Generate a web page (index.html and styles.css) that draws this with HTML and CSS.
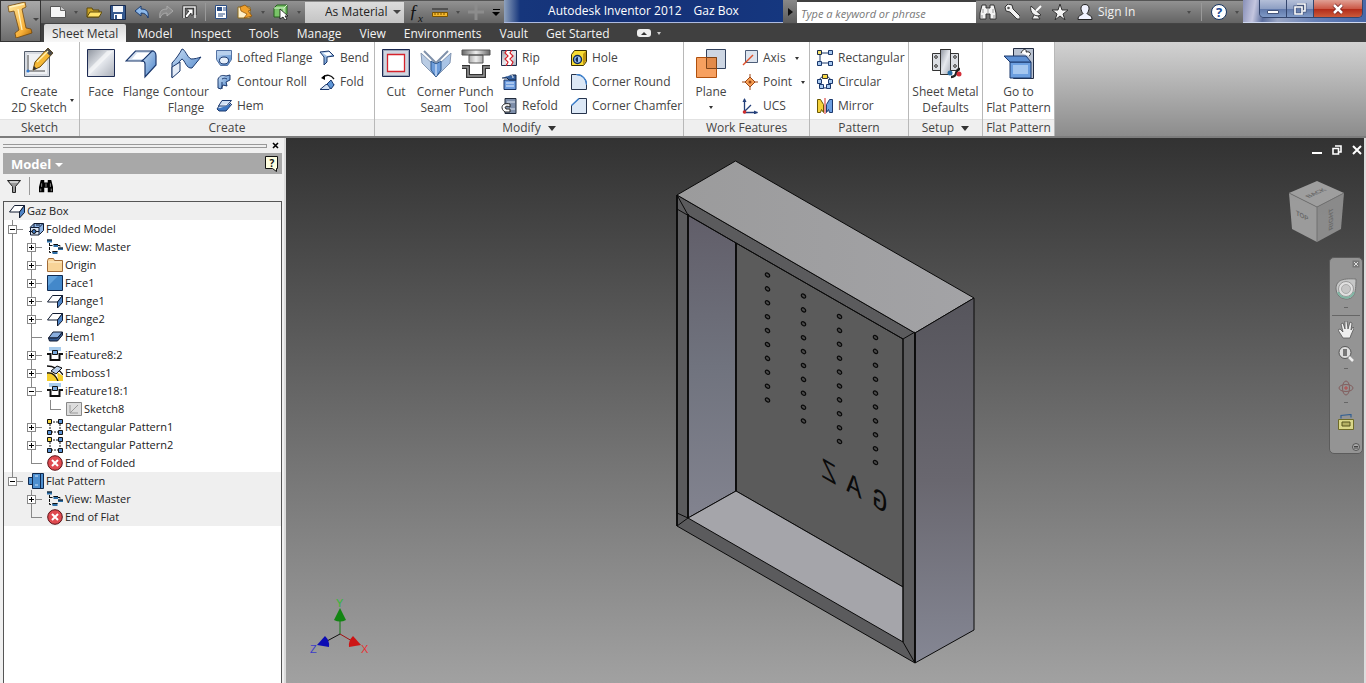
FILE: index.html
```html
<!DOCTYPE html>
<html lang="en">
<head>
<meta charset="utf-8">
<title>Autodesk Inventor 2012 - Gaz Box</title>
<link rel="stylesheet" href="styles.css">
</head>
<body>
<svg class="defs" aria-hidden="true">
  <defs>
    <linearGradient id="steel" x1="0" y1="0" x2="1" y2="1"><stop offset="0" stop-color="#8f959f"/><stop offset=".5" stop-color="#e6e9ee"/><stop offset="1" stop-color="#a9aeb8"/></linearGradient>
    <linearGradient id="blue" x1="0" y1="0" x2="1" y2="1"><stop offset="0" stop-color="#c9def4"/><stop offset="1" stop-color="#4a82c8"/></linearGradient>
    <linearGradient id="grey" x1="0" y1="0" x2="1" y2="0"><stop offset="0" stop-color="#666"/><stop offset=".5" stop-color="#eee"/><stop offset="1" stop-color="#666"/></linearGradient>
    <linearGradient id="gold" x1="0" y1="0" x2="1" y2="1"><stop offset="0" stop-color="#ffe9a0"/><stop offset=".7" stop-color="#f8b038"/><stop offset="1" stop-color="#b06a08"/></linearGradient>
    <linearGradient id="wall" x1="0" y1="0" x2="0" y2="1"><stop offset="0" stop-color="#615e69"/><stop offset=".5" stop-color="#70737e"/><stop offset="1" stop-color="#82838f"/></linearGradient>
    <linearGradient id="side" x1="0" y1="0" x2="0" y2="1"><stop offset="0" stop-color="#56555c"/><stop offset=".5" stop-color="#69676f"/><stop offset="1" stop-color="#858794"/></linearGradient>
    <linearGradient id="lid" x1="0" y1="0" x2="1" y2="0"><stop offset="0" stop-color="#9b9b9c"/><stop offset="1" stop-color="#a3a3a6"/></linearGradient>
    <symbol id="i-flange" viewBox="0 0 16 16"><path d="M5.500 2.500h10l-5 6.500h-10z" fill="#fff" stroke="#111b30"/><path d="M15.500 2.500v7l-5 5.500v-6z" fill="#4f84c6" stroke="#111b30"/></symbol>
    <symbol id="i-view" viewBox="0 0 16 16"><path d="M2.500 4v9.500h3M2.500 6.500h4M11 6.500h2v2" fill="none" stroke="#111" stroke-dasharray="3 1"/><path d="M0 .500h5v3h-5zM6.500 5h4.500v3h-4.500zM11 8.500h5v2.500h-5zM5.500 12h5v3h-5z" fill="#2d6fa8"/><path d="M0 1h5M6.500 5.500h4.500M11 9h5M5.500 12.500h5" stroke="#111"/></symbol>
    <symbol id="i-punch" viewBox="0 0 16 16"><path d="M2 0h12v4h-12z" fill="#a9cdee"/><path d="M5.500 3.500h5v4h-5z" fill="#78a9dc" stroke="#111"/><path d="M0 7h3.500v6h9v-6h3.500" fill="none" stroke="#111" stroke-width="2"/></symbol>
    <symbol id="i-pattern" viewBox="0 0 16 16"><path d="M3 3h10v10h-10z" fill="none" stroke="#111" stroke-dasharray="2 1"/><path d="M0 0h5v5h-5zM11 0h5v5h-5zM0 11h5v5h-5zM11 11h5v5h-5z" fill="#fff"/><path d="M.500 .500h4v4h-4z" fill="#f6d745" stroke="#111"/><path d="M11.500 .500h4v4h-4zM.500 11.500h4v4h-4zM11.500 11.500h4v4h-4z" fill="#5b93d5" stroke="#111"/></symbol>
    <symbol id="i-end" viewBox="0 0 16 16"><circle cx="8" cy="8" r="7.300" fill="#df4a50" stroke="#5b1116"/><path d="M5 5l6 6M11 5l-6 6" stroke="#fff" stroke-width="2"/></symbol>
    <symbol id="i-binoc" viewBox="0 0 18 16"><path d="M3 1h4v3h4v-3h4l2 8v6h-6v-5h-4v5h-6v-6z"/><path d="M4 5v4M14 5v4M3 11v3M15 11v3M9 5v4" stroke="#999" stroke-width="1"/></symbol>
    <g id="holes" fill="#4a4a4a" stroke="#0a0a0a" stroke-width="1.200">
      <ellipse id="hole" rx="2.500" ry="1.700" transform="rotate(40)"/><use href="#hole" y="13.900"/><use href="#hole" y="27.800"/><use href="#hole" y="41.700"/><use href="#hole" y="55.600"/><use href="#hole" y="69.500"/><use href="#hole" y="83.400"/><use href="#hole" y="97.300"/><use href="#hole" y="111.200"/><use href="#hole" y="125"/>
    </g>
  </defs>
</svg>

<header class="top">
  <button class="app-button" aria-label="Application menu">
    <svg width="26" height="36" viewBox="0 0 26 36"><path d="M1 4l17-4 1 5-4 2 4 19 5 1 1 4-16 5-1-5 4-3-5-19-5 1z" fill="url(#gold)" stroke="#6b3d00" stroke-width=".7"/><path d="M3 5l14-3M11 7l4 21" stroke="#fff3c0" stroke-width="1.300"/></svg>
    <i class="caret"></i>
  </button>
  <div class="top-rows">
    <div class="title-row">
      <div class="quick">
        <button class="tool" aria-label="New"><svg width="16" height="16" viewBox="0 0 16 16"><path d="M.500 2.500h10l5 4v7h-15z" fill="#f6f6f6" stroke="#555"/><path d="M10.500 2.500v4h5" fill="#ccc" stroke="#666"/></svg></button>
        <button class="drop" aria-label="New options"><i class="caret"></i></button>
        <button class="tool" aria-label="Open"><svg width="16" height="16" viewBox="0 0 16 16"><path d="M1 4h5l1 2h6v7h-12z" fill="#c9a227" stroke="#5e4a0a"/><path d="M4 8h12l-3 5h-12z" fill="#ffe26a" stroke="#5e4a0a"/></svg></button>
        <button class="tool" aria-label="Save"><svg width="16" height="16" viewBox="0 0 16 16"><path d="M.500 1.500h15v14h-15z" fill="#35598f" stroke="#16294d"/><path d="M3 2h10v6h-10z" fill="#f3f6fb"/><path d="M4 10h8v5h-8z" fill="#fff"/><path d="M5 11h2v4h-2z" fill="#35598f"/></svg></button>
        <button class="tool" aria-label="Undo"><svg width="16" height="16" viewBox="0 0 16 16"><path d="M1 7l6-5v3c6 0 8 3 7 9-1-3-3-5-7-5v3z" fill="#8db9ea" stroke="#1c3c70"/></svg></button>
        <button class="tool" aria-label="Redo"><svg width="16" height="16" viewBox="0 0 16 16"><path d="M15 7l-6-5v3c-6 0-8 3-7 9 1-3 3-5 7-5v3z" fill="#8a8a8a" stroke="#aaa"/></svg></button>
        <button class="tool" aria-label="Return"><svg width="16" height="16" viewBox="0 0 16 16"><path d="M2 14v-11h11v8" fill="none" stroke="#222" stroke-width="3"/><path d="M2 14v-11h11v11" fill="none" stroke="#eee" stroke-width="1.600"/><path d="M5 5h6v6h-2v-2l-4 5-2-2 4-5h-2z" fill="#fff" stroke="#222" stroke-width=".8"/></svg></button>
        <i class="split"></i>
        <button class="tool" aria-label="Document settings"><svg width="14" height="16" viewBox="0 0 14 16"><path d="M1.500 1.500h11v13h-11z" fill="#fff" stroke="#2c4e84"/><path d="M3 3h5v4h-5z" fill="#2c4e84"/><path d="M9 4h3M9 6h3M4 10h7M4 12h5" stroke="#2c4e84"/></svg></button>
        <button class="tool" aria-label="Update"><svg width="16" height="16" viewBox="0 0 16 16"><path d="M1 3h12v11h-12z" fill="#fff0c8" stroke="#8a6a20"/><path d="M3 3l5-2 6 5-3 1 4 5-8 2 3-4-6-3z" fill="#f0a12c" stroke="#8a4c00" stroke-width=".7"/></svg></button>
        <button class="drop" aria-label="Update options"><i class="caret"></i></button>
        <button class="tool" aria-label="Select"><svg width="16" height="16" viewBox="0 0 16 16"><path d="M1 4l3-3h10v9l-3 3h-10z" fill="#79c468" stroke="#255e1c"/><path d="M1 4h10v9M11 4l3-3" fill="none" stroke="#d8f5d0"/><path d="M7 5v10l3-2 2 3 2-1-2-3h3z" fill="#fff" stroke="#111" stroke-width=".8"/></svg></button>
        <button class="drop" aria-label="Select options"><i class="caret"></i></button>
        <label class="material"><select aria-label="Color override"><option>As Material</option></select><i class="caret"></i></label>
        <button class="tool fx" aria-label="Parameters">ƒ<sub>x</sub></button>
        <button class="tool" aria-label="Measure"><svg width="16" height="16" viewBox="0 0 16 16"><path d="M0 5h16" stroke="#222"/><path d="M.500 8.500h15v4h-15z" fill="#f5b82e" stroke="#7d5500"/><path d="M3 9v2M6 9v2M9 9v2M12 9v2" stroke="#7d5500"/></svg></button>
        <button class="drop" aria-label="Measure options"><i class="caret"></i></button>
        <button class="tool" aria-label="Add"><svg width="16" height="16" viewBox="0 0 16 16"><path d="M0 8h16M8 0v16" stroke="#8c8c8c" stroke-width="3"/></svg></button>
        <button class="drop customize" aria-label="Customize"><i class="bar"></i><i class="caret dark"></i></button>
      </div>
      <h1 class="app-title"><span>Autodesk Inventor 2012</span><span>Gaz Box</span></h1>
      <button class="search-arrow" aria-label="Toggle search"><i></i></button>
      <input class="search" type="text" aria-label="Search" placeholder="Type a keyword or phrase">
      <div class="info">
        <button class="tool" aria-label="Search help"><svg class="pale" width="18" height="16"><use href="#i-binoc"/></svg></button>
        <button class="tool" aria-label="Subscription"><svg width="16" height="16" viewBox="0 0 16 16"><path d="M1 3l3-3 4 1 1 4 7 7v3h-3l-7-7-4-1z" fill="#f2f2f2" stroke="#333"/><circle cx="4.500" cy="4" r="1.300" fill="#555"/></svg></button>
        <button class="tool" aria-label="Communication center"><svg width="16" height="16" viewBox="0 0 16 16"><path d="M3 2l10 9c-5 3-12-2-10-9zM6 11l-2 4h8l-2-3" fill="#f2f2f2" stroke="#333"/><path d="M8 7l5-5" stroke="#fff" stroke-width="2"/></svg></button>
        <button class="tool" aria-label="Favorites"><svg width="16" height="16" viewBox="0 0 16 16"><path d="M8 0l2 6h6l-5 4 2 6-5-4-5 4 2-6-5-4h6z" fill="#f4f4f4" stroke="#333"/></svg></button>
        <button class="sign-in"><svg width="16" height="16" viewBox="0 0 16 16"><path d="M8 .500c6 0 4 7 2 9 1 2 5 1 5 6h-14c0-5 4-4 5-6-2-2-4-9 2-9z" fill="#f0f2ff" stroke="#222"/></svg>Sign In</button>
        <button class="drop" aria-label="Sign in options"><i class="caret"></i></button>
        <i class="split"></i>
        <button class="tool" aria-label="Help"><svg width="16" height="16" viewBox="0 0 16 16"><circle cx="8" cy="8" r="7.500" fill="#fff" stroke="#16345f"/><text x="8" y="13" text-anchor="middle" class="help-mark">?</text></svg></button>
        <button class="drop" aria-label="Help options"><i class="caret"></i></button>
      </div>
      <div class="window-area">
        <div class="window-buttons">
          <button aria-label="Minimize"><svg width="14" height="12" viewBox="0 0 14 12"><path d="M1.500 7.500h11v3h-11z" fill="#fff" stroke="#45557a"/></svg></button>
          <button aria-label="Restore"><svg width="14" height="12" viewBox="0 0 14 12"><path d="M4 1h8v7h-2M2 4h7v7h-7z" fill="none" stroke="#45557a" stroke-width="3"/><path d="M4 1h8v7h-2M2 4h7v7h-7z" fill="none" stroke="#fff" stroke-width="1.600"/></svg></button>
          <button class="close" aria-label="Close"><svg width="14" height="12" viewBox="0 0 14 12"><path d="M3 2l8 8M11 2l-8 8" stroke="#702020" stroke-width="4"/><path d="M3 2l8 8M11 2l-8 8" stroke="#fff" stroke-width="2.500"/></svg></button>
        </div>
      </div>
    </div>
    <nav class="tabs">
      <button class="tab active">Sheet Metal</button><button class="tab">Model</button><button class="tab">Inspect</button><button class="tab">Tools</button><button class="tab">Manage</button><button class="tab">View</button><button class="tab">Environments</button><button class="tab">Vault</button><button class="tab">Get Started</button>
      <button class="collapse" aria-label="Minimize ribbon"><i class="pill"></i><i class="caret pale"></i></button>
    </nav>
  </div>
</header>

<div class="ribbon">
  <section class="panel sketch">
    <div class="panel-body">
      <button class="big"><svg width="32" height="32" viewBox="0 0 32 32"><path d="M1.500 4.500h25v25h-25z" fill="#d7dbe2" stroke="#555e6c"/><path d="M4 7h20v20h-20z" fill="#eff1f4"/><path d="M5 8v16h17" fill="none" stroke="#444"/><circle cx="5" cy="24" r="1.600" fill="#2f78d0"/><path d="M10 23l2-8L25 1l5 5-13 14z" fill="#f5b836" stroke="#6d4a08"/><path d="M25 1l5 5-3 3-5-5z" fill="#4b4b4b"/><path d="M14 15L25 4" stroke="#fff0b0" stroke-width="1.500"/><path d="M10 23l1-4 3 3z" fill="#333"/></svg><span>Create<br>2D Sketch</span></button>
      <i class="caret ink sketch-caret"></i>
    </div>
    <h2>Sketch</h2>
  </section>
  <section class="panel create">
    <div class="panel-body">
      <button class="big"><svg width="32" height="32" viewBox="0 0 32 32"><path d="M2.500 2.500h27v27h-27z" fill="url(#steel)" stroke="#1c2a52"/><path d="M4 22L22 4h6L4 28z" fill="#fff" opacity=".55"/></svg><span>Face</span></button>
      <button class="big"><svg width="32" height="32" viewBox="0 0 32 32"><path d="M10.500 4h17l-9 10h-17.500z" fill="#d5e0ee" stroke="#1b386d" stroke-width="1.200"/><path d="M27 4c3 0 4 2 4 5v9L20 30v-13c0-2-1-3-3-3z" fill="url(#blue)" stroke="#1b386d" stroke-width="1.200"/><path d="M12 6h12l-6 6h-11z" fill="#fff"/></svg><span>Flange</span></button>
      <button class="big"><svg width="32" height="32" viewBox="0 0 32 32"><path d="M2 16c4-4 8-10 10-14 3 0 5 8 9 10 4 0 7-1 10-2l-9 11c-6 1-7-8-10-9C9 14 6 20 2 30z" fill="url(#blue)" stroke="#1b386d"/><path d="M2 20l8-5v9l-8 7z" fill="#e4ecf7" stroke="#1b386d"/></svg><span>Contour<br>Flange</span></button>
      <div class="smalls">
        <button class="small"><svg width="16" height="16" viewBox="0 0 16 16"><path d="M.500 .500h15v9l-4 6h-7l-4-6z" fill="url(#blue)" stroke="#5372a3"/><path d="M1 1h14v4h-14z" fill="#b8d0ec"/><ellipse cx="8" cy="10.500" rx="4.500" ry="3.500" fill="#e6effa" stroke="#1b386d"/></svg>Lofted Flange</button>
        <button class="small"><svg width="16" height="16" viewBox="0 0 16 16"><path d="M2 5c2-4 5-4 8-3l4-1v5l-4 2 1 4-4-1-2 4-3-1z" fill="url(#blue)" stroke="#1b386d"/><path d="M6 5c2-1 3-1 5 0M6 8v7" stroke="#1b386d" fill="none"/></svg>Contour Roll</button>
        <button class="small"><svg width="16" height="16" viewBox="0 0 16 16"><path d="M6 2.500h9.500l-5 5.500h-8zM3 8l-2 3h8l6-6" fill="#cfe0f5" stroke="#1b386d"/><path d="M1 11l2 2h7l6-7" fill="#3c77c4" stroke="#1b386d"/></svg>Hem</button>
      </div>
      <div class="smalls">
        <button class="small"><svg width="16" height="16" viewBox="0 0 16 16"><path d="M1 2l9-1 5 5-7 1v5l-3 3v-8z" fill="url(#blue)" stroke="#1b386d"/><path d="M4 3l6-1 3 3-5 1z" fill="#fff"/></svg>Bend</button>
        <button class="small"><svg width="16" height="16" viewBox="0 0 16 16"><path d="M1 15.500l6-5h8l-5 5z" fill="#d3e2f4" stroke="#1b386d"/><path d="M8 10l4-4 3 5-3 4z" fill="#5f96d6" stroke="#1b386d"/><path d="M4 3c4-3 8-2 11 2" fill="none" stroke="#111" stroke-width="1.300"/><path d="M2 4l4-3v5z"/></svg>Fold</button>
      </div>
    </div>
    <h2>Create</h2>
  </section>
  <section class="panel modify">
    <div class="panel-body">
      <button class="big"><svg width="32" height="32" viewBox="0 0 32 32"><path d="M2.500 2.500h27v27h-27z" fill="#9aa5b9" stroke="#1c2a52"/><path d="M4 4h24v24h-24z" fill="#cfd6e1"/><path d="M7.500 7.500h17v17h-17z" fill="#fff" stroke="#d5232c" stroke-width="1.300"/></svg><span>Cut</span></button>
      <button class="big"><svg width="32" height="32" viewBox="0 0 32 32"><path d="M1 6l14 13v10L2 16z" fill="#b9cce4" stroke="#8497b3"/><path d="M31 6L17 19v10l13-13z" fill="#a9c4e6" stroke="#8497b3"/><path d="M4 4l12 12L28 4" fill="none" stroke="#8092ab" stroke-width="2"/><path d="M11 14l5 3 5-3v9l-5 7-5-7z" fill="#6c9cda" stroke="#2c588f"/><path d="M16 17v12" stroke="#eaf2ff"/></svg><span>Corner<br>Seam</span></button>
      <button class="big"><svg width="32" height="32" viewBox="0 0 32 32"><path d="M2 3h28v5h-28zM9 8h14v8h-14z" fill="url(#grey)" stroke="#555"/><path d="M2 20h6v9h16v-9h6" fill="none" stroke="#333" stroke-width="4"/><path d="M2 20h6v9h16v-9h6" fill="none" stroke="#999" stroke-width="1.500"/></svg><span>Punch<br>Tool</span></button>
      <div class="smalls">
        <button class="small"><svg width="16" height="16" viewBox="0 0 16 16"><path d="M.500 .500h15v15h-15z" fill="url(#steel)" stroke="#222e4d"/><path d="M5 1h6v14h-6z" fill="#fff"/><path d="M6 0l-2 3 3 3-3 3 3 3-2 4M11 0l-2 3 3 3-3 3 3 3-2 4" fill="none" stroke="#d3222c" stroke-width="1.200"/></svg>Rip</button>
        <button class="small"><svg width="16" height="16" viewBox="0 0 16 16"><path d="M3 6h12v9.500h-12z" fill="#6b9add" stroke="#1a3566"/><path d="M1 4h5l2 2h7v-5h-6" fill="#35609e" stroke="#122748"/><path d="M5 9h8M5 12h8" stroke="#e7f1ff"/><path d="M6 2c3-2 6-2 6 2" fill="none" stroke="#fff"/></svg>Unfold</button>
        <button class="small"><svg width="16" height="16" viewBox="0 0 16 16"><path d="M4 .500h11v15h-11z" fill="#7d8eaa" stroke="#202a3b"/><path d="M6 4h8M6 11h8" stroke="#dfe6f2"/><path d="M9 6c-9-2-10 5-5 8h5v-3h-4c-2-2 0-4 4-2z" fill="#fff" stroke="#222"/></svg>Refold</button>
      </div>
      <div class="smalls">
        <button class="small"><svg width="16" height="16" viewBox="0 0 16 16"><path d="M.500 4.500l3-4h12v11l-3 4h-12z" fill="#f8dc33" stroke="#3b3000"/><path d="M12 4l3-3v10l-3 4z" fill="#c09612"/><circle cx="6.500" cy="9.500" r="4" fill="#9cc2ef" stroke="#0e2959" stroke-width="1.400"/><path d="M7 7a2 2 0 100 5z" fill="#0e2959"/></svg>Hole</button>
        <button class="small"><svg width="16" height="16" viewBox="0 0 16 16"><path d="M.500 .500h5c6 0 10 5 10 10v5h-15z" fill="#dce8f6" stroke="#26344c"/><path d="M5.500 .500c6 0 10 5 10 10" stroke="#3f83cf" fill="none" stroke-width="1.400"/></svg>Corner Round</button>
        <button class="small"><svg width="16" height="16" viewBox="0 0 16 16"><path d="M8 .500h7.500v15h-15v-8z" fill="#dce8f6" stroke="#26344c"/><path d="M.500 7.500L8 .500" stroke="#3f83cf" stroke-width="1.500"/></svg>Corner Chamfer</button>
      </div>
    </div>
    <h2>Modify <i class="caret ink large"></i></h2>
  </section>
  <section class="panel work">
    <div class="panel-body">
      <button class="big"><svg width="32" height="32" viewBox="0 0 32 32"><path d="M11.500 2.500h19v19h-19z" fill="#cdd6e3" stroke="#33435f"/><path d="M1.500 10.500h20v20h-20z" fill="#f7a05f" stroke="#b0500d"/><path d="M11.500 10.500h10v11h-10z" fill="#e28a4a" stroke="#7e4317"/></svg><span>Plane</span><i class="caret ink"></i></button>
      <div class="smalls">
        <button class="small"><svg width="16" height="16" viewBox="0 0 16 16"><path d="M3.500 .500h12v12h-12z" fill="#dde4ee" stroke="#4d5d78"/><path d="M1 15L11 5" stroke="#e0522c" stroke-width="1.500"/></svg>Axis<i class="caret ink"></i></button>
        <button class="small"><svg width="16" height="16" viewBox="0 0 16 16"><path d="M0 8h16M8 0v16" stroke="#9c4515"/><path d="M8 3l5 5-5 5-5-5z" fill="#f6a055" stroke="#9c4515"/><circle cx="8" cy="8" r="1.500" fill="#9c4515"/></svg>Point<i class="caret ink"></i></button>
        <button class="small"><svg width="16" height="16" viewBox="0 0 16 16"><path d="M2.500 1v13.500h13M2 14L9 7" fill="none" stroke="#24407a" stroke-width="1.300"/><path d="M.500 4l2-4 2 4zM12 12.500l4 2-4 2z" fill="#24407a"/><circle cx="2.500" cy="14" r="1.800" fill="#cf2c2c"/></svg>UCS</button>
      </div>
    </div>
    <h2>Work Features</h2>
  </section>
  <section class="panel pattern">
    <div class="panel-body">
      <div class="smalls">
        <button class="small"><svg width="16" height="16" viewBox="0 0 16 16"><path d="M5 3h6M3 5v6M5 13h6" stroke="#1b386d"/><path d="M.500 .500h4v4h-4z" fill="#f6e36a" stroke="#1b2a48"/><path d="M11.500 .500h4v4h-4zM.500 11.500h4v4h-4zM11.500 11.500h4v4h-4z" fill="#a7c9f0" stroke="#1b386d"/></svg>Rectangular</button>
        <button class="small"><svg width="16" height="16" viewBox="0 0 16 16"><circle cx="8" cy="8" r="6" fill="none" stroke="#1b386d"/><path d="M5.500 .500h5v4h-5z" fill="#f6d745" stroke="#333"/><path d="M.500 5.500h4v4h-4zM11.500 5.500h4v4h-4zM2.500 10.500h4v4h-4zM9.500 10.500h4v4h-4z" fill="#a7c9f0" stroke="#1b386d"/></svg>Circular</button>
        <button class="small"><svg width="16" height="16" viewBox="0 0 16 16"><path d="M.500 1.500h3l3 5v8l-2-3-1 3h-3z" fill="#f5d23b" stroke="#6b5800"/><path d="M15.500 1.500h-3l-3 5v8l2-3 1 3h3z" fill="#6d9fe2" stroke="#1b386d"/><path d="M8 0v16" stroke="#d42b2b"/></svg>Mirror</button>
      </div>
    </div>
    <h2>Pattern</h2>
  </section>
  <section class="panel setup">
    <div class="panel-body">
      <button class="big"><svg width="32" height="32" viewBox="0 0 32 32"><path d="M2.500 6.500h8v-4h10v4h8v17h-8v4h-10v-4h-8z" fill="#dcdfe4" stroke="#333"/><path d="M10.500 2.500h10v25h-10z" fill="url(#steel)" stroke="#333"/><g fill="#fff" stroke="#222"><circle cx="6" cy="10" r="1.300"/><circle cx="6" cy="19" r="1.300"/><circle cx="25" cy="10" r="1.300"/><circle cx="25" cy="19" r="1.300"/></g><path d="M21 30c8 0 3-8 9-8" fill="none" stroke="#222" stroke-width="2.500"/><circle cx="20" cy="26" r="2.500" fill="#2a6fa5"/><circle cx="29" cy="27" r="2.500" fill="#d3303a"/></svg><span>Sheet Metal<br>Defaults</span></button>
    </div>
    <h2>Setup <i class="caret ink large"></i></h2>
  </section>
  <section class="panel flat">
    <div class="panel-body">
      <button class="big"><svg width="32" height="32" viewBox="0 0 32 32"><path d="M10.500 1.500h20v30h-20z" fill="#b9c2d1" stroke="#222c42"/><path d="M18 6c3-6 6-3 5-1 4-1 6 2 3 4" fill="#fff" stroke="#222"/><path d="M7 15h21v16h-21z" fill="#6c9fe0" stroke="#1b386d"/><path d="M1 9h22l5 6h-21z" fill="#5e90d3" stroke="#1b386d"/><path d="M10 18h15v9h-15z" fill="#a5c7f0"/></svg><span>Go to<br>Flat Pattern</span></button>
    </div>
    <h2>Flat Pattern</h2>
  </section>
</div>

<main class="work-area">
  <aside class="browser">
    <div class="grip"><i></i><button aria-label="Close browser"><svg width="7" height="7" viewBox="0 0 7 7"><path d="M1 1l5 5M6 1l-5 5" stroke="#000" stroke-width="1.600"/></svg></button></div>
    <div class="browser-head"><button>Model<i class="caret white"></i></button><svg class="tip" width="14" height="16" viewBox="0 0 14 16"><path d="M.500 .500h12v12h-1v3l-4-3h-7z" fill="#ffffe0" stroke="#111"/><text x="7" y="11" text-anchor="middle" class="tip-mark">?</text></svg></div>
    <div class="browser-tools">
      <button aria-label="Filter"><svg width="14" height="13" viewBox="0 0 14 13"><path d="M.500 .500h13l-5 6v6h-3v-6z" fill="#999" stroke="#222"/><path d="M3 2h8" stroke="#fff"/></svg></button>
      <i class="rule"></i>
      <button aria-label="Find"><svg width="16" height="14"><use href="#i-binoc"/></svg></button>
    </div>
    <div class="tree">
      <div class="row root"><svg><use href="#i-flange"/></svg>Gaz Box</div>
      <ul class="level-one">
        <li><div class="row"><button class="fold open" aria-label="Collapse"></button><svg viewBox="0 0 16 16"><path d="M2 6.500l4-4h9.500v7l-4 4" fill="#8db3e2" stroke="#111b30"/><path d="M2.500 6.500h8.500v7.500h-8.500zM11 6.500l4-4M6 2.500v4" fill="#dce8f7" stroke="#111b30"/><path d="M1 10.500h10M8 4h4" stroke="#111b30"/><circle cx="6" cy="10.500" r="2" fill="#3c74bb" stroke="#111"/></svg>Folded Model</div>
          <ul>
            <li><div class="row"><button class="fold" aria-label="Expand"></button><svg><use href="#i-view"/></svg>View: Master</div></li>
            <li><div class="row"><button class="fold" aria-label="Expand"></button><svg viewBox="0 0 16 16"><path d="M.500 3.500l1-2h5l1 2h8v11h-15z" fill="#f8d498" stroke="#a26c38"/><path d="M1 5h14" stroke="#fff0d0"/></svg>Origin</div></li>
            <li><div class="row"><button class="fold" aria-label="Expand"></button><svg viewBox="0 0 16 16"><path d="M.500 .500h15v15h-15z" fill="#4388ca" stroke="#10294f"/><path d="M1 1h10l-10 10z" fill="#62a2dc"/></svg>Face1</div></li>
            <li><div class="row"><button class="fold" aria-label="Expand"></button><svg><use href="#i-flange"/></svg>Flange1</div></li>
            <li><div class="row"><button class="fold" aria-label="Expand"></button><svg><use href="#i-flange"/></svg>Flange2</div></li>
            <li><div class="row"><i class="stub"></i><svg viewBox="0 0 16 16"><path d="M6 3h9.500l-5 6h-9z" fill="#8aaede" stroke="#111b30"/><path d="M1.500 9l1 3h8l5-6v-3l-5 6z" fill="#35598f" stroke="#111b30"/></svg>Hem1</div></li>
            <li><div class="row"><button class="fold" aria-label="Expand"></button><svg><use href="#i-punch"/></svg>iFeature8:2</div></li>
            <li><div class="row"><button class="fold" aria-label="Expand"></button><svg viewBox="0 0 16 16"><path d="M0 8c6-2 10 2 11 8h-11zM10 7l6 4v5h-5z" fill="#f5cf2a"/><path d="M0 1c6 0 12 3 16 9M0 8c5-1 9 3 11 8" fill="none" stroke="#111" stroke-width="1.300"/><path d="M4 6l6-5 5 2-6 6z" fill="#b8cee8" stroke="#111"/></svg>Emboss1</div></li>
            <li><div class="row"><button class="fold open" aria-label="Collapse"></button><svg><use href="#i-punch"/></svg>iFeature18:1</div>
              <ul><li><div class="row"><i class="stub"></i><svg viewBox="0 0 16 16"><path d="M.500 1.500h15v13h-15z" fill="#ddd" stroke="#888"/><path d="M4 4v8h8M4 12l8-8" fill="none" stroke="#999"/></svg>Sketch8</div></li></ul>
            </li>
            <li><div class="row"><button class="fold" aria-label="Expand"></button><svg><use href="#i-pattern"/></svg>Rectangular Pattern1</div></li>
            <li><div class="row"><button class="fold" aria-label="Expand"></button><svg><use href="#i-pattern"/></svg>Rectangular Pattern2</div></li>
            <li><div class="row"><i class="stub"></i><svg><use href="#i-end"/></svg>End of Folded</div></li>
          </ul>
        </li>
        <li class="shaded"><div class="row"><button class="fold open" aria-label="Collapse"></button><svg viewBox="0 0 16 16"><path d="M.500 4.500h4v-4h11v15h-11v-4h-4z" fill="#4d8fd0" stroke="#10294f"/><path d="M4.500 4v8M12.500 1v14" stroke="#10294f"/><path d="M7 3h3M7 12h3" stroke="#cfe4fa"/></svg>Flat Pattern</div>
          <ul>
            <li><div class="row"><button class="fold" aria-label="Expand"></button><svg><use href="#i-view"/></svg>View: Master</div></li>
            <li><div class="row"><i class="stub"></i><svg><use href="#i-end"/></svg>End of Flat</div></li>
          </ul>
        </li>
      </ul>
    </div>
  </aside>

  <section class="viewport">
    <svg class="model" viewBox="286 138 1078 545" preserveAspectRatio="xMidYMid meet" role="img" aria-label="Gaz Box model">
      <g stroke="#0a0a0a" stroke-linejoin="round">
        <path d="M677 195L915 333V663L677 526z" fill="#5b5b5d"/>
        <path d="M677 195L735.500 161L974 298L915 333z" fill="url(#lid)"/>
        <path d="M915 333L974 298V630L915 663z" fill="url(#side)"/>
        <path d="M688 215L736 243V491L688 518z" fill="url(#wall)"/>
        <path d="M736 243L903 339V587L736 491z" fill="#5b5b5b"/>
        <path d="M736 491L903 587V642L688 518z" fill="#a5a5aa"/>
        <path d="M677 209L903 339L915 332M677 195L688 215M677 526L688 518M677 513L688 518M903 339V642L915 663" fill="none"/>
        <path d="M677 195V526M688 214V518M736 243V491M915 333V663" fill="none" stroke-width="1.800"/>
      </g>
      <use href="#holes" x="767.500" y="275"/><use href="#holes" x="803.500" y="296"/><use href="#holes" x="839.500" y="316.500"/><use href="#holes" x="875.500" y="337.500"/>
      <g class="engraved"><text transform="matrix(-.87 -.5 0 1 880 510)">G</text><text transform="matrix(-.87 -.5 0 1 854 495)">A</text><text transform="matrix(-.87 -.5 0 1 829 481)">Z</text></g>
    </svg>

    <svg class="triad" width="62" height="60" viewBox="308 597 62 60" role="img" aria-label="Axis indicator">
      <path d="M340 634V618" stroke="#137a13"/><path d="M340 634L352 641" stroke="#a01010"/><path d="M340 634L327 641" stroke="#111"/>
      <path d="M340 608l6 12q-6 3-12 0z" fill="#128512"/><path d="M361 645l-12 2q-1-6 4-11z" fill="#cd1414"/><path d="M317 645l12 2q1-6-4-11z" fill="#0c0cb4"/>
      <text x="336" y="607" fill="#35b835">Y</text><text x="361" y="653" fill="#e63232">X</text><text x="310" y="653" fill="#3c3cc8">Z</text>
    </svg>

    <div class="doc-buttons">
      <button aria-label="Minimize document"><svg width="12" height="12" viewBox="0 0 12 12"><path d="M1 8h10v2h-10z" fill="#fff"/></svg></button>
      <button aria-label="Restore document"><svg width="12" height="12" viewBox="0 0 12 12"><path d="M4 2h6v6h-2M2 4.500h5.500v5.500h-5.500z" fill="none" stroke="#fff" stroke-width="1.600"/></svg></button>
      <button aria-label="Close document"><svg width="12" height="12" viewBox="0 0 12 12"><path d="M2 2l8 8M10 2l-8 8" stroke="#fff" stroke-width="2"/></svg></button>
    </div>

    <svg class="cube" width="60" height="66" viewBox="1287 178 60 66" role="img" aria-label="View cube">
      <path d="M1317 181L1344 193L1317 207L1289 193z" fill="#a9a9a9"/><path d="M1289 193L1317 207V242L1292 229z" fill="#a5a5a5"/><path d="M1344 193L1317 207V242L1341 229z" fill="#939393"/>
      <path d="M1289 193L1317 207L1344 193M1317 207V242" fill="none" stroke="#777"/>
      <g class="cube-text"><text transform="matrix(.9 -.4 .9 .4 1309 198)">BACK</text><text transform="matrix(.87 .45 0 1 1296 215)">TOP</text><text transform="matrix(0 -1 .87 -.45 1333 229)">RIGHT</text></g>
    </svg>

    <div class="nav-bar">
      <button class="tiny" aria-label="Close navigation bar"><svg width="8" height="8" viewBox="0 0 8 8"><path d="M.500 .500h7v7h-7z" fill="#777"/><path d="M2 2l4 4M6 2l-4 4" stroke="#ddd"/></svg></button>
      <button class="wheel" aria-label="Steering wheel"><svg width="24" height="24" viewBox="0 0 24 24"><path d="M2 12a10 10 0 0010 10c8 0 10-5 10-20-15-1-20 2-20 10z" fill="#c6c7c7" stroke="#747474"/><circle cx="12" cy="12" r="7.500" fill="#e0e0e0" stroke="#999"/><path d="M4 15a8.500 8.500 0 0016 0" fill="none" stroke="#7fb5a3" stroke-width="2"/><circle cx="12" cy="12" r="4.500" fill="#c6c6c6" stroke="#aaa"/></svg><i></i></button>
      <hr>
      <button class="pan" aria-label="Pan"><svg width="16" height="18" viewBox="0 0 16 18"><path d="M5 17l-5-8 2-1 3 3-2-8 2-1 2 6v-8h2l1 8 2-7 2 1-1 7 2-3 1 1-3 7-1 3z" fill="#eee" stroke="#555" stroke-width=".8"/></svg></button>
      <button aria-label="Zoom"><svg width="16" height="16" viewBox="0 0 16 16"><circle cx="7" cy="6.500" r="6" fill="#ddd" stroke="#555"/><path d="M5 3h4v7h-4z" fill="#777"/><path d="M11 11l4 4" stroke="#eee" stroke-width="2.500"/></svg><i></i></button>
      <button aria-label="Orbit"><svg width="16" height="16" viewBox="0 0 16 16"><ellipse cx="8" cy="8" rx="7" ry="3.500" fill="none" stroke="#835f5f"/><ellipse cx="8" cy="8" rx="3.500" ry="7" fill="none" stroke="#835f5f"/><path d="M8 6v4M6 8h4" stroke="#b84848"/></svg><i></i></button>
      <button aria-label="Look at"><svg width="18" height="16" viewBox="0 0 18 16"><path d="M1.500 5.500h15v10h-15z" fill="#dad78a" stroke="#6e6b28"/><path d="M5 8h8v4h-8z" fill="#b4b064" stroke="#55531d"/><path d="M4 4.500v-3l10-1v3" fill="none" stroke="#315f92" stroke-width="1.200"/></svg></button>
      <button class="tiny last" aria-label="Customize navigation bar"><svg width="8" height="8" viewBox="0 0 8 8"><circle cx="4" cy="4" r="3.500" fill="#aaa" stroke="#555"/><path d="M2 3.500h4M2 5h4" stroke="#444"/></svg></button>
    </div>
  </section>
</main>
</body>
</html>
```
FILE: styles.css
```css
* { box-sizing: border-box; }
body { margin: 0; height: 100vh; display: flex; flex-direction: column; overflow: hidden; font: 12px/16px "Open Sans", "Noto Sans", sans-serif; color: #444; background: #f0f0f0; }
button { font: inherit; color: inherit; background: none; border: 0; padding: 0; margin: 0; }
h1, h2, ul { margin: 0; padding: 0; font: inherit; list-style: none; }
svg { display: block; flex: none; }
.defs { position: absolute; width: 0; height: 0; }

.caret { display: inline-block; flex: none; border: 3px solid transparent; border-top-color: #444; border-bottom: 0; }
.caret.dark { border-width: 4px 4px 0; border-top-color: #000; }
.caret.ink { border-width: 3px 2px 0; border-top-color: #333; }
.caret.ink.large { border-width: 5px 4px 0; margin-left: 4px; vertical-align: 1px; }
.caret.pale { border-width: 3px 2px 0; border-top-color: #ccc; }
.caret.white { border-width: 4px 4px 0; border-top-color: #fff; margin-left: 4px; vertical-align: 2px; }

/* Title bar and tabs */
.top { display: flex; height: 42px; flex: none; background: #404040; }
.app-button { display: flex; align-items: center; justify-content: space-between; width: 41px; padding: 0 3px 3px 6px; border: 1px solid #333; background: linear-gradient(#a8a8a8, #8b8b8b 50%, #6c6c6c); }
.top-rows { flex: 1; min-width: 0; display: flex; flex-direction: column; }
.title-row { display: flex; height: 24px; border-bottom: 1px solid #444; }
.quick, .info { display: flex; align-items: center; border-top: 1px solid #555; background: linear-gradient(#929292, #7a7a7a 50%, #646464); }
.quick { padding-left: 5px; }
.tool { display: grid; place-items: center; width: 24px; height: 22px; }
.drop { display: grid; place-items: center; width: 12px; height: 22px; }
.drop .caret { border-width: 3px 2px 0; border-top-color: #4c4c4c; }
.customize { width: 16px; align-content: center; gap: 2px; }
.customize .bar { width: 7px; height: 1px; background: #000; }
.customize .caret.dark { border-width: 4px 4px 0; border-top-color: #000; }
.split { width: 1px; height: 18px; margin: 0 3px; background: #999; }
.fx { display: flex; align-items: center; justify-content: center; font: italic 18px/20px "Liberation Serif", serif; color: #111; }
.fx sub { font-size: 11px; line-height: 10px; align-self: flex-end; }
.material { position: relative; display: flex; align-items: center; width: 99px; height: 21px; background: linear-gradient(#dcdcdc, #c4c4c4); }
.material select { appearance: none; width: 100%; height: 21px; padding: 0 14px 0 20px; border: 0; background: none; font: inherit; color: #222; }
.material .caret { position: absolute; right: 3px; border-width: 4px 4px 0; }
.app-title { flex: 1; min-width: 0; display: flex; align-items: center; justify-content: center; gap: 12px; color: #fff; white-space: nowrap; overflow: hidden; border-bottom: 1px solid #aebbe0; background: linear-gradient(90deg, #8fa2bd, #16367c 16px, #153178 50%, #15377f); }
.search-arrow { display: grid; place-items: center; width: 14px; background: linear-gradient(#888, #5c5c5c); }
.search-arrow i { border: 4px solid transparent; border-left: 5px solid #111; border-right: 0; }
.search { width: 179px; height: 21px; margin-top: 2px; padding: 3px 4px 1px; border: 0; background: #fff; font: italic 11px/16px "Open Sans", sans-serif; }
.search::placeholder { color: #777; opacity: 1; }
.info { width: 267px; }
.info .split { margin: 0 5px 0 6px; }
.pale { fill: #f3f3f3; stroke: #333; stroke-width: 1px; }
.sign-in { flex: 1; display: flex; align-items: center; gap: 5px; padding-left: 5px; color: #f2f2f2; }
.help-mark { font: bold 13px "Open Sans", sans-serif; fill: #1d4a94; }
.window-area { width: 123px; padding-right: 3px; border-bottom: 1px solid #cfd8ee; background: linear-gradient(100deg, #8890b8, #c4c6df 10%, #5c6f9f 18%, #9aa6c4 30%, #6680b6 60%, #4767a8); }
.window-buttons { display: flex; width: 104px; height: 18px; margin-left: auto; border: 1px solid #34466e; border-top: 0; border-radius: 0 0 5px 5px; overflow: hidden; }
.window-buttons button { display: grid; place-items: center; width: 27px; border-right: 1px solid #34466e; background: linear-gradient(#b4bfd8, #8fa0c4 50%, #5e76a8 51%, #7f99c6); }
.window-buttons .close { flex: 1; border: 0; background: linear-gradient(#e0a094, #cc5a48 50%, #b02918 51%, #cc5a3a); }
.tabs { display: flex; align-items: flex-end; flex: 1; padding-left: 3px; color: #f4f4f4; white-space: nowrap; }
.tab { height: 18px; padding: 0 9px; line-height: 17px; }
.tab.active { padding: 0 8px; margin-right: 2px; color: #333; background: linear-gradient(#d8d8d8, #f8f8f8); border-radius: 2px 2px 0 0; }
.collapse { display: flex; align-items: center; gap: 6px; height: 18px; margin-left: 18px; }
.pill { display: grid; place-items: center; width: 14px; height: 8px; border-radius: 3px; background: #eee; }
.pill::before { content: ""; border: 3px solid transparent; border-bottom-color: #333; border-top: 0; }

/* Ribbon */
.ribbon { display: flex; flex: none; height: 96px; border-bottom: 2px solid #7c7c7c; background: linear-gradient(#d2d2d2, #8c8c8c); }
.panel { display: flex; flex-direction: column; flex: none; border-right: 1px solid #b8b8b8; background: #fff; }
.panel-body { position: relative; display: flex; flex: 1; padding: 5px 1px 0; white-space: nowrap; }
.panel h2 { height: 17px; text-align: center; background: #efefef; border-top: 1px solid #e2e2e2; }
.big { display: flex; flex: none; flex-direction: column; align-items: center; gap: 5px; height: 70px; width: 40px; }
.big > .caret { margin-top: 1px; }
.smalls { display: flex; flex: none; flex-direction: column; margin-top: -1px; }
.small { display: flex; align-items: center; gap: 5px; height: 24px; padding-left: 3px; }
.small .caret { margin-left: 4px; }
.sketch { width: 80px; }
.sketch .big { width: 76px; }
.sketch-caret { position: absolute; right: 5px; bottom: 17px; }
.create { width: 295px; }
.create .big:nth-child(3) { width: 50px; }
.create .smalls { width: 103px; padding-left: 2px; }
.create .smalls:last-child { width: auto; }
.modify { width: 309px; }
.modify .smalls { width: 70px; }
.modify .smalls:first-of-type { margin-left: 2px; }
.modify .smalls:last-child { width: auto; }
.work { width: 126px; }
.work .big { width: 52px; }
.work .smalls { padding-left: 2px; }
.pattern { width: 99px; }
.pattern .smalls { padding-left: 3px; }
.setup { width: 74px; }
.setup .big, .flat .big { width: 100%; }
.flat { width: 72px; }

/* Model browser */
.work-area { flex: 1; min-height: 0; display: flex; }
.browser { display: flex; flex-direction: column; width: 286px; flex: none; padding: 0 2px 0 3px; border-right: 2px solid #dcdcdc; color: #222; font-size: 11px; }
.grip { display: flex; align-items: center; gap: 5px; height: 15px; }
.grip i { flex: 1; height: 4px; border: 1px solid #999; border-left: 0; }
.grip button { width: 10px; }
.browser-head { display: flex; align-items: center; justify-content: space-between; height: 21px; padding: 0 3px 0 8px; color: #fff; background: #a8a8a8; }
.browser-head button { font-weight: 700; font-size: 13px; }
.tip { overflow: visible; }
.tip-mark { font: bold 10px "Open Sans", sans-serif; fill: #111; }
.browser-tools { display: flex; align-items: center; height: 27px; gap: 8px; padding: 0 0 3px 4px; }
.rule { width: 1px; height: 18px; background: #999; }
.tree { flex: 1; min-height: 0; border: 1px solid #555; border-bottom: 0; background: #fff; overflow: hidden; white-space: nowrap; }
.row { display: flex; align-items: center; height: 18px; gap: 2px; }
.row svg { width: 16px; height: 16px; }
.root { padding-left: 5px; background: #efefef; }
.tree li { position: relative; }
.tree li li { margin-left: 19px; }
.level-one > li { padding-left: 4px; }
.tree li::before { content: ""; position: absolute; left: 4px; top: 0; bottom: 0; width: 1px; background: #888; }
.tree li:last-child::before { bottom: auto; height: 9px; }
.level-one > li::before { left: 8px; }
.fold, .stub { position: relative; flex: none; width: 9px; height: 9px; margin-right: 9px; }
.fold { border: 1px solid #888; background: linear-gradient(#000, #000) center / 5px 1px no-repeat, linear-gradient(#000, #000) center / 1px 5px no-repeat, #fff; }
.fold.open { background: linear-gradient(#000, #000) center / 5px 1px no-repeat, #fff; }
.fold::after { content: ""; position: absolute; left: 8px; top: 3px; width: 6px; height: 1px; background: #888; }
.stub::after { content: ""; position: absolute; left: 4px; top: 4px; width: 11px; height: 1px; background: #888; }
.shaded { background: #efefef; }

/* Model window */
.viewport { position: relative; flex: 1; min-width: 0; border-right: 2px solid #ddd; background: linear-gradient(#323232, #a1a1a1); overflow: hidden; }
.model { width: 100%; height: 100%; }
.engraved { font: 29px "Liberation Mono", monospace; text-anchor: middle; fill: #0a0a0a; }
.triad { position: absolute; left: 22px; bottom: 26px; font: 11px "Liberation Sans", sans-serif; }
.doc-buttons { position: absolute; top: 6px; right: 1px; display: flex; gap: 8px; }
.cube { position: absolute; top: 40px; right: 17px; opacity: .9; }
.cube-text { font: bold 7px "Liberation Sans", sans-serif; fill: #707070; }
.nav-bar { position: absolute; top: 119px; right: 1px; display: flex; flex-direction: column; align-items: center; width: 34px; height: 197px; padding: 2px; border: 1px solid #5c5c5c; border-radius: 5px; background: #949494; }
.nav-bar button { display: flex; flex-direction: column; align-items: center; gap: 6px; margin-bottom: 11px; }
.nav-bar button i { width: 4px; height: 1px; background: #666; }
.nav-bar .tiny { align-self: flex-end; margin-bottom: 9px; }
.nav-bar .last { margin: auto 0 0; }
.nav-bar .wheel { margin-bottom: 7px; }
.nav-bar .pan { margin-bottom: 7px; }
.nav-bar hr { width: 28px; margin: 0 0 5px; border: 0; border-top: 1px solid #666; }
```
